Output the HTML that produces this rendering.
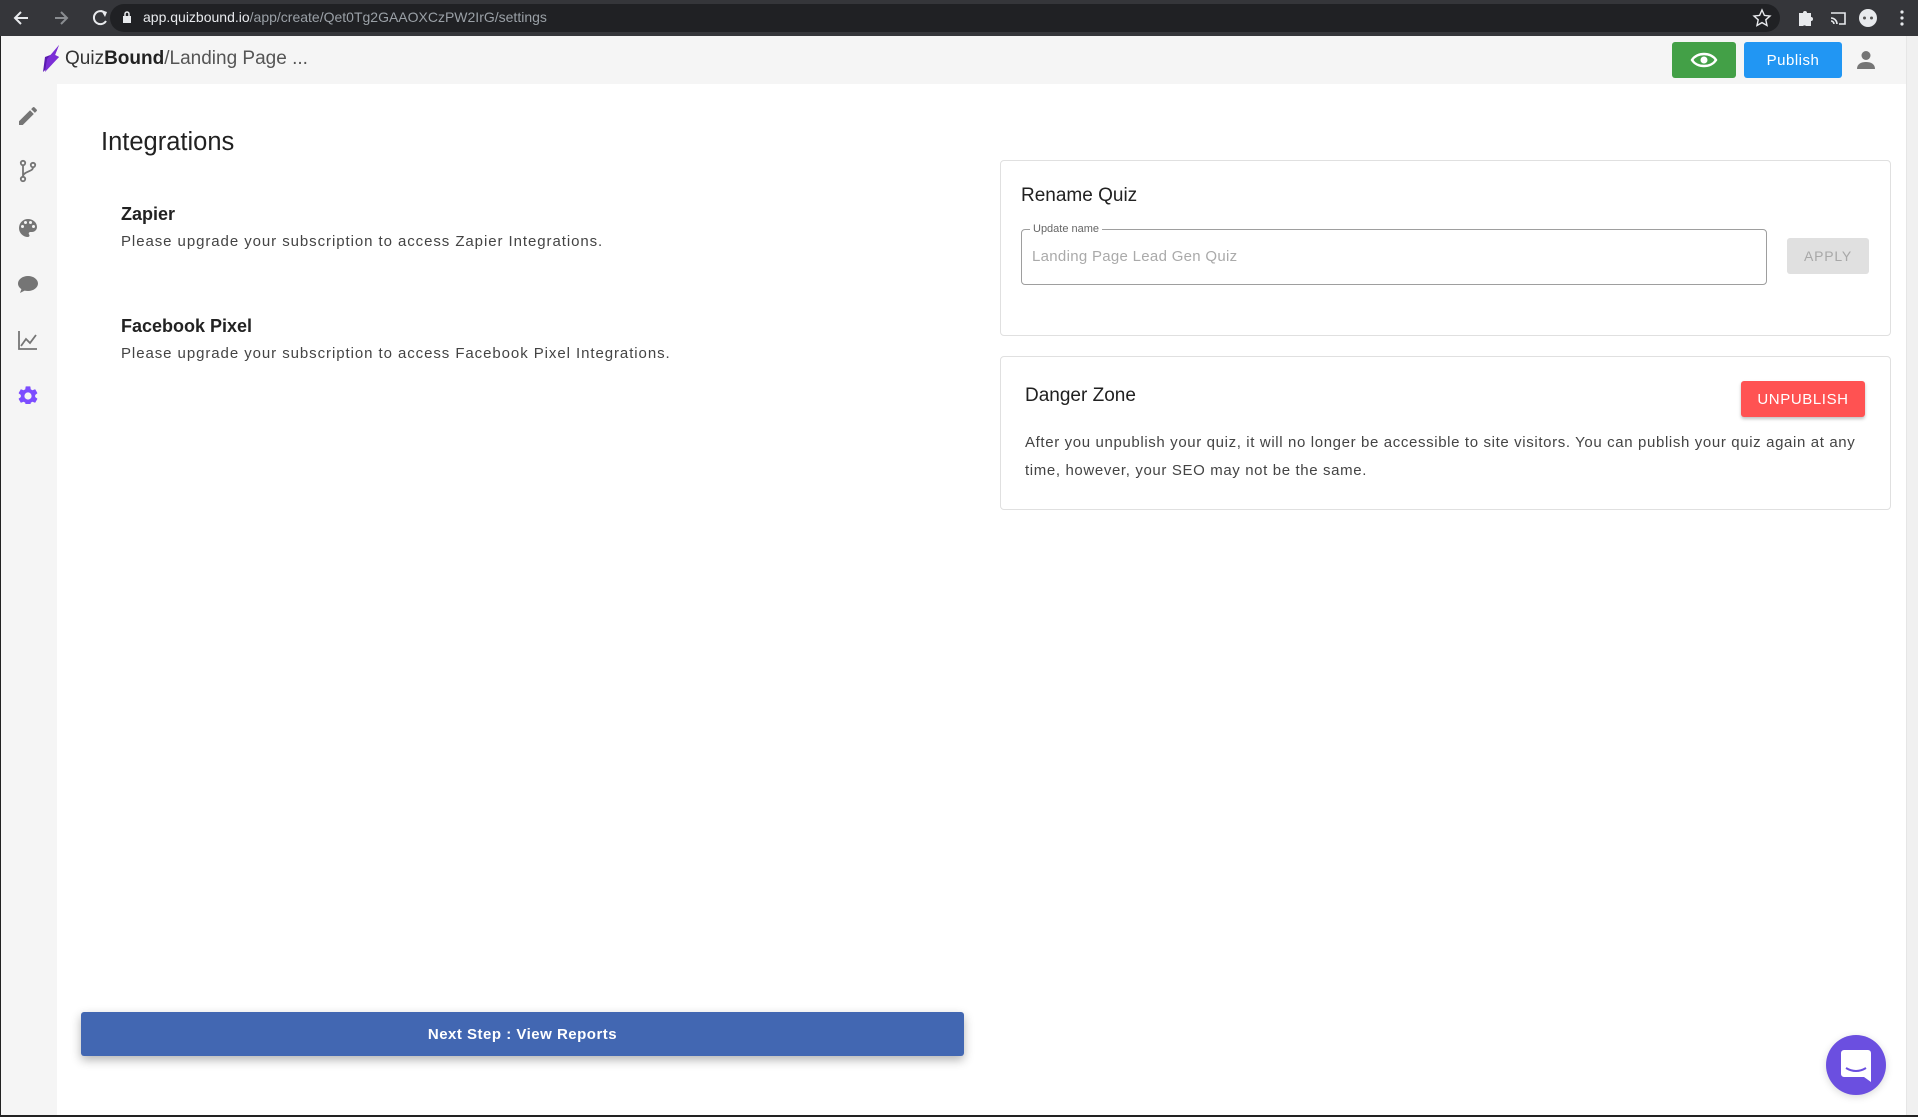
<!DOCTYPE html>
<html><head><meta charset="utf-8">
<style>
*{box-sizing:border-box;margin:0;padding:0}
html,body{width:1918px;height:1117px;overflow:hidden;background:#fff;font-family:"Liberation Sans",sans-serif}
.abs{position:absolute}
#chrome{left:0;top:0;width:1918px;height:36px;background:#35363a}
#omni{left:110px;top:4px;width:1670px;height:28px;border-radius:14px;background:#202124}
#url{left:143px;top:9px;font-size:14px;color:#9aa0a6;white-space:nowrap}
#url b{font-weight:normal;color:#e8eaed}
#hdr{left:0;top:36px;width:1906px;height:48px;background:#f5f5f5}
#side{left:0;top:84px;width:57px;height:1033px;background:#f5f5f5}
#scroll{left:1906px;top:36px;width:12px;height:1081px;background:#f0f0f0;border-left:1px solid #e6e6e6}
.t{color:#212121}
.card{border:1px solid #e0e0e0;border-radius:4px;background:#fff}
</style></head><body>
<div id="chrome" class="abs"></div>
<svg class="abs" style="left:12px;top:8px" width="120" height="20" viewBox="0 0 120 20">
<path d="M16 10H4M9 4L3 10L9 16" stroke="#e8eaed" stroke-width="2" fill="none"/>
<path d="M43 10H55M49 4L55 10L49 16" stroke="#8a8d91" stroke-width="2" fill="none"/>
<path d="M93 5A6.5 6.5 0 1 0 94 13" stroke="#e8eaed" stroke-width="2" fill="none"/><path d="M89 2L95 4L93 9Z" fill="#e8eaed"/>
</svg>
<div id="omni" class="abs"></div>
<svg class="abs" style="left:122px;top:10px" width="10" height="14"><rect x="1" y="6" width="8" height="7" fill="#e8eaed"/><path d="M3 6V4a2 2 0 0 1 4 0V6" stroke="#e8eaed" stroke-width="1.5" fill="none"/></svg>
<div id="url" class="abs"><b>app.quizbound.io</b>/app/create/Qet0Tg2GAAOXCzPW2IrG/settings</div>
<svg class="abs" style="left:1752px;top:8px" width="160" height="20">
<path d="M10 2L12.4 7.4L18 8L13.8 11.8L15 17.5L10 14.6L5 17.5L6.2 11.8L2 8L7.6 7.4Z" stroke="#e8eaed" stroke-width="1.4" fill="none"/>
<path d="M47 5h4a2 2 0 0 1 4 0h4v4a2 2 0 0 1 0 4v5h-5a2 2 0 0 0-3 0h-4z" fill="#e8eaed"/>
<path d="M79 5h14v11h-6M79 10a6 6 0 0 1 6 6M79 13a3 3 0 0 1 3 3" stroke="#e8eaed" stroke-width="1.6" fill="none"/>
<circle cx="116" cy="10" r="9" fill="#e8eaed"/><circle cx="112.5" cy="10" r="1.5" fill="#555"/><circle cx="119.5" cy="10" r="1.5" fill="#555"/>
<circle cx="150" cy="4" r="1.6" fill="#e8eaed"/><circle cx="150" cy="10" r="1.6" fill="#e8eaed"/><circle cx="150" cy="16" r="1.6" fill="#e8eaed"/>
</svg>

<div id="hdr" class="abs"></div>
<svg class="abs" style="left:42px;top:45px" width="18" height="28" viewBox="0 0 18 28"><path d="M17 0L13 10L17 12L1 27L3 12L11 9Z" fill="#5a1bb0"/><path d="M17 0L13 10L17 12L3 27L5 14Z" fill="#7b2ed6"/></svg>
<div class="abs" style="left:65px;top:48px;font-size:19px;color:#333;white-space:nowrap">Quiz<b style="color:#222">Bound</b><span style="color:#555">/Landing Page ...</span></div>
<div class="abs" style="left:1672px;top:42px;width:64px;height:36px;background:#43a047;border-radius:3px"></div>
<svg class="abs" style="left:1690px;top:50px" width="28" height="20" viewBox="0 0 28 20"><path d="M2 10C7 2 21 2 26 10C21 18 7 18 2 10Z" stroke="#fff" stroke-width="2.4" fill="none"/><circle cx="14" cy="10" r="3.5" fill="#fff"/></svg>
<div class="abs" style="left:1744px;top:42px;width:98px;height:36px;background:#2196f3;border-radius:3px;color:#fff;font-size:15px;letter-spacing:.5px;text-align:center;line-height:38px">Publish</div>
<svg class="abs" style="left:1857px;top:50px" width="18" height="20"><circle cx="9" cy="5.5" r="4.5" fill="#757575"/><path d="M0 19c0-5 4-7 9-7s9 2 9 7z" fill="#757575"/></svg>

<div id="side" class="abs"></div>
<svg class="abs" style="left:16px;top:104px" width="24" height="300" viewBox="0 0 24 300" fill="#757575">
<path d="M3 17.25V21h3.75L17.81 9.94l-3.75-3.75zM20.71 7.04a1 1 0 0 0 0-1.41l-2.34-2.34a1 1 0 0 0-1.41 0l-1.83 1.83 3.75 3.75z"/>
<g transform="translate(0,55)" stroke="#757575" stroke-width="1.8" fill="none"><circle cx="7" cy="4" r="2.2"/><circle cx="7" cy="20" r="2.2"/><circle cx="17" cy="6" r="2.2"/><path d="M7 6.2V17.8M17 8.2C17 13 8 12 7 17"/></g>
<path transform="translate(0,112)" d="M12 3a9 9 0 0 0 0 18c.83 0 1.5-.67 1.5-1.5 0-.39-.15-.74-.39-1.01-.23-.26-.38-.61-.38-.99 0-.83.67-1.5 1.5-1.5H16c2.76 0 5-2.240 5-5 0-4.420-4.030-8-9-8zm-5.5 9a1.5 1.5 0 1 1 0-3 1.5 1.5 0 0 1 0 3zm3-4a1.5 1.5 0 1 1 0-3 1.5 1.5 0 0 1 0 3zm5 0a1.5 1.5 0 1 1 0-3 1.5 1.5 0 0 1 0 3zm3 4a1.5 1.5 0 1 1 0-3 1.5 1.5 0 0 1 0 3z"/>
<path transform="translate(0,168)" d="M12 4C6.5 4 2 7.4 2 11.5c0 2.2 1.3 4.2 3.4 5.6L4 21l4.6-2.4c1.1.3 2.2.4 3.4.4 5.5 0 10-3.4 10-7.5S17.5 4 12 4z"/>
<g transform="translate(0,224)" stroke="#757575" stroke-width="1.8" fill="none"><path d="M3 3V21H21M5 18L10 11L14 15L20 7"/></g>
<path transform="translate(0,280)" fill="#7c4dff" d="M19.14 12.94c.04-.3.06-.61.06-.94s-.02-.64-.07-.94l2.030-1.58a.49.49 0 0 0 .12-.61l-1.92-3.32a.49.49 0 0 0-.59-.22l-2.39.96c-.5-.38-1.03-.7-1.62-.94l-.36-2.54a.48.48 0 0 0-.48-.41h-3.84a.48.48 0 0 0-.47.41l-.36 2.54c-.59.24-1.13.57-1.62.94l-2.39-.96a.48.48 0 0 0-.59.22L2.74 8.87a.47.47 0 0 0 .12.61l2.03 1.58c-.05.3-.09.63-.09.94s.02.64.07.94l-2.03 1.58a.49.49 0 0 0-.12.61l1.92 3.32c.12.22.37.29.59.22l2.39-.96c.5.38 1.03.7 1.62.94l.36 2.54c.05.24.24.41.48.41h3.84c.24 0 .44-.17.47-.41l.36-2.54c.59-.24 1.13-.56 1.62-.94l2.39.96c.22.08.47 0 .59-.22l1.92-3.32a.47.47 0 0 0-.12-.61zM12 15.6A3.6 3.6 0 1 1 12 8.4a3.6 3.6 0 0 1 0 7.2z"/>
</svg>

<div class="abs t" style="left:101px;top:128px;font-size:25.5px">Integrations</div>
<div class="abs t" style="left:121px;top:204px;font-size:18px;font-weight:bold;color:#222">Zapier</div>
<div class="abs" style="left:121px;top:233px;font-size:15px;color:#444;letter-spacing:.93px">Please upgrade your subscription to access Zapier Integrations.</div>
<div class="abs t" style="left:121px;top:316px;font-size:18px;font-weight:bold;color:#222">Facebook Pixel</div>
<div class="abs" style="left:121px;top:345px;font-size:15px;color:#444;letter-spacing:.93px">Please upgrade your subscription to access Facebook Pixel Integrations.</div>

<div class="abs card" style="left:1000px;top:160px;width:891px;height:176px"></div>
<div class="abs t" style="left:1021px;top:185px;font-size:19px">Rename Quiz</div>
<div class="abs" style="left:1021px;top:229px;width:746px;height:56px;border:1px solid #9e9e9e;border-radius:4px"></div>
<div class="abs" style="left:1030px;top:223px;padding:0 3px;background:#fff;font-size:11px;color:#666">Update name</div>
<div class="abs" style="left:1032px;top:248px;font-size:15px;color:#aaa;letter-spacing:.3px">Landing Page Lead Gen Quiz</div>
<div class="abs" style="left:1787px;top:238px;width:82px;height:36px;background:#e0e0e0;border-radius:3px;color:#a8a8a8;font-size:14px;letter-spacing:.8px;text-align:center;line-height:36px">APPLY</div>

<div class="abs card" style="left:1000px;top:356px;width:891px;height:154px"></div>
<div class="abs t" style="left:1025px;top:385px;font-size:19px">Danger Zone</div>
<div class="abs" style="left:1741px;top:381px;width:124px;height:36px;background:#ff5252;border-radius:3px;color:#fff;font-size:15px;letter-spacing:.6px;text-align:center;line-height:37px;box-shadow:0 2px 3px rgba(0,0,0,.25)">UNPUBLISH</div>
<div class="abs" style="left:1025px;top:429px;width:845px;font-size:15px;line-height:28px;color:#444;letter-spacing:.63px">After you unpublish your quiz, it will no longer be accessible to site visitors. You can publish your quiz again at any time, however, your SEO may not be the same.</div>

<div class="abs" style="left:81px;top:1012px;width:883px;height:44px;background:#4267b2;border-radius:3px;color:#fff;font-size:15px;font-weight:bold;letter-spacing:.5px;text-align:center;line-height:46px;box-shadow:0 4px 10px rgba(0,0,0,.3)">Next Step : View Reports</div>

<div id="scroll" class="abs"></div>
<div class="abs" style="left:1826px;top:1035px;width:60px;height:60px;border-radius:50%;background:#6b4fe0;box-shadow:0 2px 8px rgba(0,0,0,.15)"></div>
<svg class="abs" style="left:1841px;top:1050px" width="30" height="32" viewBox="0 0 30 32"><path d="M3 0H27a3 3 0 0 1 3 3V32L23 27H3a3 3 0 0 1-3-3V3A3 3 0 0 1 3 0Z" fill="#fff"/><path d="M5 18Q15 24 25 18" stroke="#6b4fe0" stroke-width="2" fill="none"/></svg>
<div class="abs" style="left:0;top:36px;width:1px;height:1081px;background:#222"></div>
<div class="abs" style="left:0;top:1115px;width:1918px;height:2px;background:#222"></div>
</body></html>
